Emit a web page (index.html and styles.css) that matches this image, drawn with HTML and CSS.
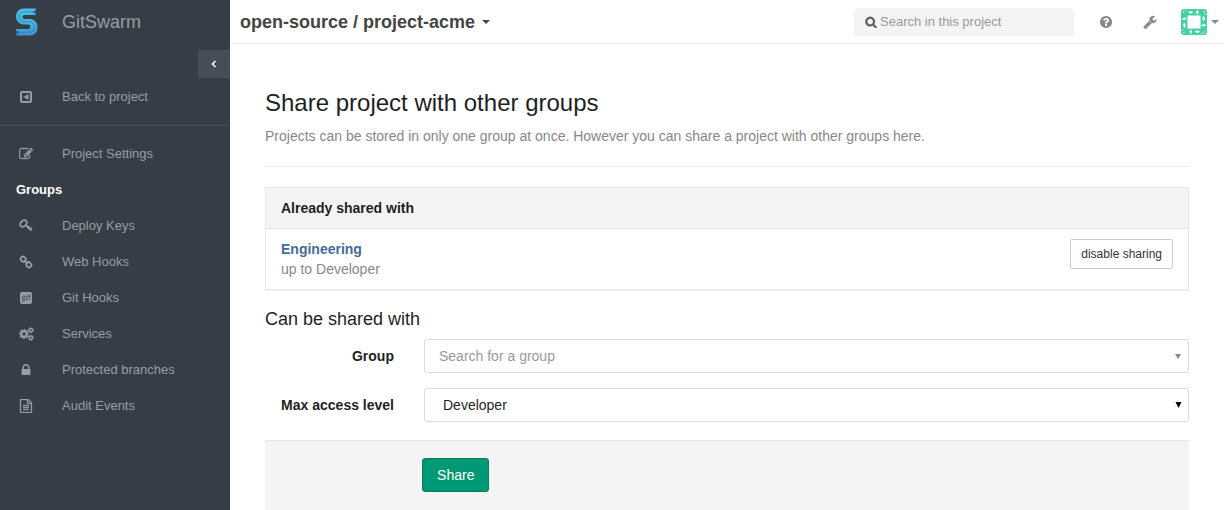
FILE: index.html
```html
<!DOCTYPE html>
<html lang="en">
<head>
<meta charset="utf-8">
<meta name="viewport" content="width=device-width, initial-scale=1">
<title>Groups · project-acme · GitSwarm</title>
<link rel="stylesheet" href="styles.css">
</head>
<body>
<div class="layout">
  <aside class="sidebar">
    <a class="brand" href="#">
      <svg class="brand-logo" viewBox="0 0 22 28" aria-hidden="true">
        <defs>
          <linearGradient id="swarm" x1="0" y1="0" x2="0" y2="1">
            <stop offset="0" stop-color="#4dbfe2"/>
            <stop offset=".6" stop-color="#45b0dc"/>
            <stop offset="1" stop-color="#3a93cb"/>
          </linearGradient>
        </defs>
        <path fill="url(#swarm)" d="M20 .5v6.500H8.500a1.500 1.500 0 0 0 0 4H14a7.500 7.500 0 0 1 7.500 7.500v1A7.500 7.500 0 0 1 14 27.500H0V21h12.500a2.300 2.300 0 0 0 0-4.500H7.500A7.500 7.500 0 0 1 0 9V8A7.500 7.500 0 0 1 7.500.5z"/>
        <path fill="none" stroke="#2c7db2" stroke-width=".7" d="M17 3.800H8a5 5 0 0 0 0 10h5.500a5.200 5.200 0 0 1 0 10.400H4"/>
        <path fill="#1f66aa" d="M20 1.500v5L16.500 4zM0 22v5l3.500-2.800z"/>
      </svg>
      <span class="brand-name">GitSwarm</span>
    </a>
    <button class="collapse" type="button" aria-label="Collapse sidebar">
      <svg viewBox="0 0 6 8" width="6" height="8" aria-hidden="true"><path d="M4.500 1L1.500 4l3 3" fill="none" stroke="#fff" stroke-width="1.500"/></svg>
    </button>
    <nav class="nav">
      <a class="nav-link" href="#">
        <svg class="icon" viewBox="0 0 14 14" aria-hidden="true"><path fill-rule="evenodd" d="M3 1h8a2 2 0 0 1 2 2v8a2 2 0 0 1-2 2H3a2 2 0 0 1-2-2V3a2 2 0 0 1 2-2zm0 2v8h8V3zM9.500 4v6L4.300 7z"/></svg>
        Back to project</a>
      <hr class="nav-divider">
      <a class="nav-link" href="#">
        <svg class="icon icon-heavy" viewBox="0 0 1792 1792" aria-hidden="true"><path d="M888 1184l116-116-152-152-116 116v56h96v96h56zm440-720q-16-16-33 1l-350 350q-17 17-1 33t33-1l350-350q17-17 1-33zm80 594v190q0 119-84.500 203.500t-203.500 84.500h-832q-119 0-203.500-84.500t-84.500-203.500v-832q0-119 84.500-203.500t203.500-84.500h832q63 0 117 25 15 7 18 23 3 17-9 29l-49 49q-14 14-32 8-23-6-45-6h-832q-66 0-113 47t-47 113v832q0 66 47 113t113 47h832q66 0 113-47t47-113v-126q0-13 9-22l64-64q15-15 35-7t20 29zm-96-738l288 288-672 672h-288v-288zm444 132l-92 92-288-288 92-92q28-28 68-28t68 28l152 152q28 28 28 68t-28 68z"/></svg>
        Project Settings</a>
      <a class="nav-link nav-link-active" href="#" aria-current="page">Groups</a>
      <a class="nav-link" href="#">
        <svg class="icon icon-line" viewBox="0 0 14 14" aria-hidden="true"><ellipse cx="4.500" cy="4.500" rx="3.800" ry="2.800" transform="rotate(-45 4.500 4.500)" stroke-width="1.800"/><path d="M6.800 6.200l5.600 5.400M13 8.800l-2.300 2.400M10.600 7.200L8.600 9.500" stroke-width="1.800"/></svg>
        Deploy Keys</a>
      <a class="nav-link" href="#">
        <svg class="icon icon-line" viewBox="0 0 14 14" aria-hidden="true"><g stroke-width="1.800"><rect x="1.600" y="1.900" width="5.200" height="4.600" rx="2.100" transform="rotate(45 4.200 4.200)"/><rect x="7.200" y="7.500" width="5.200" height="4.600" rx="2.100" transform="rotate(45 9.800 9.800)"/><path d="M5.300 5.300l3.400 3.400"/></g></svg>
        Web Hooks</a>
      <a class="nav-link" href="#">
        <svg class="icon" viewBox="0 0 14 14" aria-hidden="true"><rect x="1" y="1" width="12" height="12" rx="2"/><g fill="none" stroke="#373d47" stroke-width=".8"><ellipse cx="4.500" cy="6.300" rx="1.300" ry="1.200"/><path d="M5.500 5h1M3.600 7.700l2 .8q.9 1-.4 1.700t-2.200-.5q0-.8 1-1.200M7 5.200h1v3.300M7 8.600h2M7.600 3.500h.8M10.400 3.400v4.400q.3.800 1.300.6M9.300 5.200h2.400"/></g></svg>
        Git Hooks</a>
      <a class="nav-link" href="#">
        <svg class="icon icon-line icon-wide" viewBox="0 0 15 14" aria-hidden="true"><circle cx="5" cy="7" r="2.800" stroke-width="2.200"/><circle cx="5" cy="7" r="4.300" stroke-width="1.400" stroke-dasharray="1.700 1.677" stroke-dashoffset=".85"/><circle cx="11.800" cy="3.300" r="1.700" stroke-width="1.500"/><circle cx="11.800" cy="3.300" r="2.600" stroke-width=".9" stroke-dasharray="1.300 1.422"/><circle cx="11.800" cy="10.700" r="1.700" stroke-width="1.500"/><circle cx="11.800" cy="10.700" r="2.600" stroke-width=".9" stroke-dasharray="1.300 1.422"/></svg>
        Services</a>
      <a class="nav-link" href="#">
        <svg class="icon" viewBox="0 0 1792 1792" aria-hidden="true"><path d="M640 768h512v-192q0-106-75-181t-181-75-181 75-75 181v192zm832 96v576q0 40-28 68t-68 28h-960q-40 0-68-28t-28-68v-576q0-40 28-68t68-28h32v-192q0-184 132-316t316-132 316 132 132 316v192h32q40 0 68 28t28 68z"/></svg>
        Protected branches</a>
      <a class="nav-link" href="#">
        <svg class="icon icon-heavy" viewBox="0 0 1792 1792" aria-hidden="true"><path d="M1596 380q28 28 48 76t20 88v1152q0 40-28 68t-68 28h-1344q-40 0-68-28t-28-68v-1600q0-40 28-68t68-28h896q40 0 88 20t76 48zm-444-244v376h376q-10-29-22-41l-313-313q-12-12-41-22zm384 1528v-1024h-416q-40 0-68-28t-28-68v-416h-768v1536h1280zm-1024-864q0-14 9-23t23-9h704q14 0 23 9t9 23v64q0 14-9 23t-23 9h-704q-14 0-23-9t-9-23v-64zm736 224q14 0 23 9t9 23v64q0 14-9 23t-23 9h-704q-14 0-23-9t-9-23v-64q0-14 9-23t23-9h704zm0 256q14 0 23 9t9 23v64q0 14-9 23t-23 9h-704q-14 0-23-9t-9-23v-64q0-14 9-23t23-9h704z"/></svg>
        Audit Events</a>
    </nav>
  </aside>

  <div class="page">
    <header class="topbar">
      <div class="project-title">
        <a href="#">open-source / project-acme</a>
        <button class="caret-button" type="button" aria-label="Switch project"><span class="caret"></span></button>
      </div>
      <form class="search">
        <svg class="search-icon" viewBox="0 0 1792 1792" aria-hidden="true"><path d="M1216 832q0-185-131.500-316.500t-316.500-131.500-316.500 131.500-131.500 316.500 131.500 316.500 316.500 131.500 316.500-131.500 131.500-316.500zm512 832q0 52-38 90t-90 38q-54 0-90-38l-343-342q-179 124-399 124-143 0-273.500-55.500t-225-150-150-225-55.500-273.500 55.500-273.500 150-225 225-150 273.500-55.500 273.500 55.500 225 150 150 225 55.500 273.500q0 220-124 399l343 343q37 37 37 90z"/></svg>
        <input class="search-input" type="search" placeholder="Search in this project" aria-label="Search in this project">
      </form>
      <a class="tool" href="#" aria-label="Help">
        <svg class="icon" viewBox="0 0 1792 1792" aria-hidden="true"><path d="M1024 1376v-192q0-14-9-23t-23-9h-192q-14 0-23 9t-9 23v192q0 14 9 23t23 9h192q14 0 23-9t9-23zm256-672q0-88-55.500-163t-138.500-116-170-41q-243 0-371 213-15 24 8 42l132 100q7 6 19 6 16 0 25-12 53-68 86-92 34-24 86-24 48 0 85.500 26t37.500 59q0 38-20 61t-68 45q-63 28-115.500 86.500t-52.500 125.500v36q0 14 9 23t23 9h192q14 0 23-9t9-23q0-19 21.500-49.500t54.500-49.500q32-18 49-28.500t46-35 44.500-48 28-60.500 12.500-81zm384 192q0 209-103 385.500t-279.500 279.500-385.500 103-385.500-103-279.500-279.500-103-385.500 103-385.500 279.500-279.500 385.500-103 385.500 103 279.500 279.500 103 385.500z"/></svg>
      </a>
      <a class="tool" href="#" aria-label="Admin area">
        <svg class="icon icon-heavy" viewBox="0 0 1792 1792" aria-hidden="true"><path d="M448 1472q0-26-19-45t-45-19-45 19-19 45 19 45 45 19 45-19 19-45zm644-420l-682 682q-37 37-90 37-52 0-91-37l-106-108q-38-36-38-90 0-53 38-91l681-681q39 98 114.500 173.500t173.500 114.500zm634-435q0 39-23 106-47 134-164.500 217.500t-258.500 83.500q-185 0-316.500-131.500t-131.500-316.500 131.500-316.500 316.500-131.500q58 0 121.500 16.500t107.500 46.500q16 11 16 28t-16 28l-293 169v224l193 107q5-3 79-48.500t135.500-81 70.500-35.500q15 0 23.500 10t8.500 25z"/></svg>
      </a>
      <button class="profile" type="button" aria-label="Account menu">
        <svg class="avatar" viewBox="0 0 26 26" aria-hidden="true">
          <defs>
            <g id="side">
              <path d="M6.800 3.300L9.700 2l2.800 1.300-2.800 1.400z"/>
              <path d="M16.300.5l1.300 2.800-1.300 2.800L15 3.300z"/>
              <path d="M1.500 3L3 2l.2 1.800zM3.800 1.200l1.700-.4-.3 1.700z"/>
            </g>
          </defs>
          <rect width="26" height="26" rx="3" fill="#42d0a4"/>
          <rect x="6.500" y="6.500" width="13" height="13" fill="#fff"/>
          <g fill="#fff">
            <use href="#side"/>
            <use href="#side" transform="rotate(90 13 13)"/>
            <use href="#side" transform="rotate(180 13 13)"/>
            <use href="#side" transform="rotate(270 13 13)"/>
          </g>
        </svg>
        <span class="caret"></span>
      </button>
    </header>

    <main class="content">
      <h1 class="page-title">Share project with other groups</h1>
      <p class="lead">Projects can be stored in only one group at once. However you can share a project with other groups here.</p>
      <hr class="rule">

      <section class="panel">
        <h2 class="panel-heading">Already shared with</h2>
        <ul class="panel-list">
          <li class="panel-item">
            <div>
              <a class="group-name" href="#">Engineering</a>
              <div class="group-access">up to Developer</div>
            </div>
            <button class="btn-small" type="button">disable sharing</button>
          </li>
        </ul>
      </section>

      <h2 class="form-title">Can be shared with</h2>
      <form>
        <div class="form-row">
          <label class="form-label" for="group">Group</label>
          <div class="form-field">
            <div class="select-box select-box-muted">
              <select id="group" class="select select-empty"><option>Search for a group</option></select>
              <svg class="arrow" viewBox="0 0 7 6" aria-hidden="true"><path d="M0 1h6L3 6z"/></svg>
            </div>
          </div>
        </div>
        <div class="form-row">
          <label class="form-label" for="access">Max access level</label>
          <div class="form-field">
            <div class="select-box">
              <select id="access" class="select"><option>Developer</option></select>
              <svg class="arrow" viewBox="0 0 7 6" aria-hidden="true"><path d="M.5 0h6l-3 6z"/></svg>
            </div>
          </div>
        </div>
        <div class="form-actions">
          <button class="btn-share" type="submit">Share</button>
        </div>
      </form>
    </main>
  </div>
</div>
</body>
</html>
```
FILE: styles.css
```css
* { box-sizing: border-box; }

body {
  margin: 0;
  font: 14px/20px "Liberation Sans", Arial, sans-serif;
  color: #1f1f1f;
  background: #fff;
}

a { color: inherit; text-decoration: none; }
button, input, select { font: inherit; }
button { padding: 0; border: 0; background: none; color: inherit; cursor: pointer; }
h1, h2, p, ul { margin: 0; padding: 0; }

.icon { width: 14px; height: 14px; fill: currentColor; }
.icon-line { fill: none; stroke: currentColor; }
.icon-heavy { stroke: currentColor; stroke-width: 40; }
.icon-wide { width: 15px; }

.caret {
  display: block;
  border: 4px solid transparent;
  border-top-color: currentColor;
  border-bottom: 0;
}

.layout { display: flex; min-height: 100vh; }

/* Sidebar */
.sidebar {
  flex: none;
  width: 230px;
  display: flex;
  flex-direction: column;
  background: #373d47;
  color: #979ca5;
}

.brand { display: flex; align-items: center; height: 44px; padding-left: 16px; }
.brand-logo { width: 22px; height: 28px; }
.brand-name { margin-left: 24px; font-size: 18px; }

.collapse {
  display: flex;
  align-items: center;
  justify-content: center;
  align-self: flex-end;
  width: 32px;
  height: 28px;
  margin-top: 6px;
  background: #474d57;
}

.nav { margin-top: 1px; font-size: 13px; }

.nav-link {
  display: grid;
  grid-template-columns: 20px 1fr;
  column-gap: 26px;
  align-items: center;
  height: 36px;
  padding-left: 16px;
}

.nav-link .icon { justify-self: center; }
.nav-link-active { display: flex; color: #fff; font-weight: bold; }
.nav-divider { margin: 10px 0; border: 0; border-top: 1px solid #474d57; }

/* Top bar */
.page { flex: 1; min-width: 0; }

.topbar {
  display: flex;
  align-items: center;
  height: 44px;
  padding: 0 5px 0 10px;
  border-bottom: 1px solid #eee;
  color: #888;
}

.project-title {
  display: flex;
  align-items: center;
  gap: 7px;
  margin-right: auto;
  color: #444;
  font-size: 18px;
  font-weight: bold;
}

.search {
  display: flex;
  align-items: center;
  width: 220px;
  height: 28px;
  margin-right: 25px;
  padding-left: 11px;
  border-radius: 3px;
  background: #f4f4f4;
}

.search-icon { flex: none; width: 12px; height: 12px; fill: #555; stroke: #555; stroke-width: 60; }

.search-input {
  flex: 1;
  min-width: 0;
  padding: 0 3px;
  border: 0;
  background: none;
  font-size: 13px;
}

.search-input::placeholder { color: #999; }
.tool { display: flex; margin-right: 30px; }
.tool + .profile { margin-left: -6px; }
.profile { display: flex; align-items: center; gap: 4px; }
.avatar { width: 26px; height: 26px; }

/* Content */
.content { padding: 44px 35px 0; }
.page-title { font-size: 24px; line-height: 30px; font-weight: normal; }
.lead { margin-top: 8px; color: #888; }
.rule { margin: 20px 0; border: 0; border-top: 1px solid #eee; }

.panel { border: 1px solid #e7e7e7; box-shadow: 0 1px 1px rgba(0, 0, 0, .05); }
.panel-heading {
  padding: 10px 15px;
  border-bottom: 1px solid #e7e7e7;
  background: #f4f4f4;
  font-size: 14px;
}
.panel-list { list-style: none; }
.panel-item {
  display: flex;
  align-items: flex-start;
  justify-content: space-between;
  padding: 10px 15px;
}
.group-name { color: #446ba0; font-weight: bold; }
.group-access { color: #888; }

.btn-small {
  height: 30px;
  padding: 0 10px;
  border: 1px solid #ccc;
  border-radius: 2px;
  background: #fff;
  color: #333;
  font-size: 12px;
}

.form-title { margin: 19px 0 10px; font-size: 18px; font-weight: normal; }

.form-row { display: flex; align-items: center; margin: 0 -15px 15px; }
.form-label {
  flex: 0 0 calc(100% / 6);
  padding: 0 15px;
  font-weight: bold;
  text-align: right;
}
.form-field { flex: 1; padding: 0 15px; }

.select-box { position: relative; }
.select {
  display: block;
  width: 100%;
  height: 34px;
  padding: 0 18px;
  border: 1px solid #dcdcdc;
  border-radius: 3px;
  background: #fff;
  color: #1f1f1f;
  appearance: none;
}
.select-empty { padding: 0 14px; color: #999; }
.arrow {
  position: absolute;
  top: 14px;
  right: 7px;
  width: 7px;
  height: 6px;
  pointer-events: none;
}
.select-box-muted .arrow { fill: #888; }

.form-actions {
  margin-top: 18px;
  padding: 17px 0 18px 17%;
  border-top: 1px solid #e5e5e5;
  background: #f4f4f4;
}
.btn-share {
  height: 34px;
  padding: 0 14px;
  border: 1px solid #00805f;
  border-radius: 3px;
  background: #009975;
  color: #fff;
}
```
